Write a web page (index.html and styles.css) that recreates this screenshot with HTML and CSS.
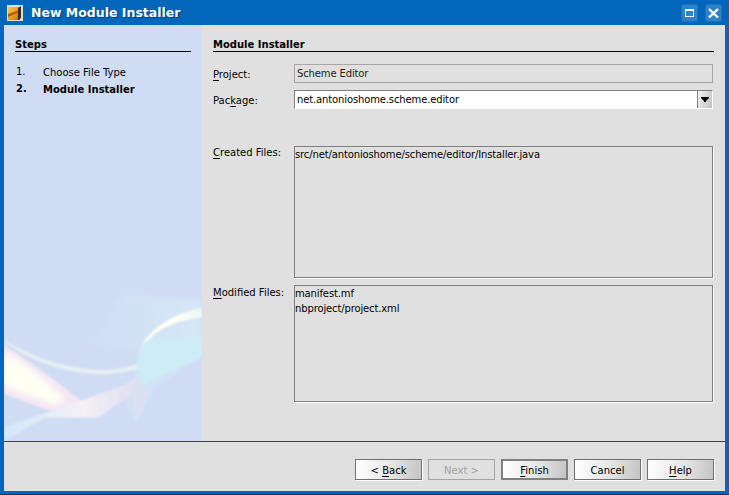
FILE: index.html
```html
<!DOCTYPE html>
<html lang="en">
<head>
<meta charset="utf-8">
<title>New Module Installer</title>
<link rel="stylesheet" href="styles.css">
</head>
<body>
<div class="window">
  <header class="titlebar">
    <svg class="app-icon" width="16" height="16" viewBox="0 0 16 16">
      <defs>
        <linearGradient id="ic" x1="0" y1="0" x2="1" y2="1">
          <stop offset="0" stop-color="#f8c848"/><stop offset="0.55" stop-color="#ec9a20"/><stop offset="1" stop-color="#c8600c"/>
        </linearGradient>
      </defs>
      <rect width="16" height="16" fill="#e4dccc"/>
      <rect x="1" y="2" width="12" height="13" fill="url(#ic)"/>
      <path d="M1 9 L13 5 V7 L1 12Z" fill="#b85810"/>
      <path d="M11 3 L14 1 V13 L11 15Z" fill="#3c2c28"/>
    </svg>
    <h1 class="title">New Module Installer</h1>
    <div class="win-btn">
      <svg width="17" height="18" viewBox="0 0 17 18"><rect x="4.5" y="5.5" width="8" height="7" fill="none" stroke="#fff"/><rect x="4" y="5" width="9" height="2" fill="#fff"/></svg>
    </div>
    <div class="win-btn">
      <svg width="17" height="18" viewBox="0 0 17 18"><path d="M4 5 L13 13.5 M13 5 L4 13.5" stroke="#fff" stroke-width="2.4" fill="none"/></svg>
    </div>
  </header>
  <div class="body">
    <aside class="steps">
      <svg class="swoosh" width="198" height="161" viewBox="0 0 198 161" aria-hidden="true">
        <defs>
          <filter id="b1" x="-20%" y="-20%" width="140%" height="140%"><feGaussianBlur stdDeviation="0.8"/></filter>
          <filter id="b2" x="-20%" y="-20%" width="140%" height="140%"><feGaussianBlur stdDeviation="3"/></filter>
          <linearGradient id="pale" x1="0" y1="0" x2="1" y2="0">
            <stop offset="0" stop-color="#d4e9f6" stop-opacity="0.3"/><stop offset="1" stop-color="#dcf0f8"/>
          </linearGradient>
          <linearGradient id="cres" x1="0" y1="1" x2="1" y2="0">
            <stop offset="0" stop-color="#f8eef0"/><stop offset="0.35" stop-color="#fffff4"/><stop offset="0.7" stop-color="#fffff4"/><stop offset="1" stop-color="#ecf6f4"/>
          </linearGradient>
          <linearGradient id="rib" x1="0" y1="0" x2="1" y2="0">
            <stop offset="0" stop-color="#d4e8f8"/><stop offset="0.6" stop-color="#f4f1f6"/><stop offset="1" stop-color="#eadff0" stop-opacity="0.6"/>
          </linearGradient>
        </defs>
        <path d="M119 13 L92 57 L76 62 L120 70 L198 77 V20 L150 18Z" fill="url(#pale)" opacity="0.6" filter="url(#b2)"/>
        <path d="M133 88 L150 60 L198 80 L198 77 L150 108 L132 145 L120 120Z" fill="#d6ecf6" opacity="0.4" filter="url(#b1)"/>
        <path d="M133 84 C133 70 140 62 149 58 L198 57 V77 C175 87 155 97 140 106 C134 100 133 92 133 84Z" fill="#cdecf6" filter="url(#b1)"/>
        <path d="M133 84 C134 55 165 34 198 28 V37 C175 40 155 48 147 58 C138 63 134 72 133 84Z" fill="url(#cres)" filter="url(#b1)"/>
        <path d="M0 60 C30 78 60 88 96 90 C110 90 122 88 133 84 L134 89 C118 93 105 95 90 94 C60 92 28 82 0 62Z" fill="#e8f0f2" filter="url(#b1)"/>
        <path d="M0 65 C30 85 55 102 76 120 L96 137 L52 133 L0 114Z" fill="#f4e6f4" filter="url(#b1)"/>
        <path d="M0 72 C18 82 40 98 62 120 L50 125 L0 106Z" fill="#fffff2" filter="url(#b2)"/>
        <path d="M133 93 L143 117 L132 140 L128 112Z" fill="#e6e0f0" opacity="0.5" filter="url(#b1)"/>
        <path d="M0 147 C45 132 85 118 112 108 L133 98 L126 116 L95 137 L40 138 L0 161Z" fill="url(#rib)" filter="url(#b1)"/>
      </svg>
      <h2 class="heading">Steps</h2>
      <ol class="step-list">
        <li class="step"><span class="num">1.</span><span>Choose File Type</span></li>
        <li class="step current"><span class="num">2.</span><span>Module Installer</span></li>
      </ol>
    </aside>
    <main class="panel">
      <h2 class="heading">Module Installer</h2>
      <div class="form">
        <div class="row row-project">
          <label class="label"><u>P</u>roject:</label>
          <div class="field">Scheme Editor</div>
        </div>
        <div class="row row-package">
          <label class="label">Pac<u>k</u>age:</label>
          <div class="combo">
            <div class="combo-text">net.antonioshome.scheme.editor</div>
            <div class="combo-btn"><svg width="8" height="5" viewBox="0 0 8 5"><path d="M0 0 H8 V1 L5 4 V5 H3 V4 L0 1Z" fill="#000"/></svg></div>
          </div>
        </div>
        <div class="row row-created">
          <label class="label"><u>C</u>reated Files:</label>
          <div class="area area-created">src/net/antonioshome/scheme/editor/Installer.java</div>
        </div>
        <div class="row row-modified">
          <label class="label"><u>M</u>odified Files:</label>
          <div class="area area-modified">manifest.mf<br>nbproject/project.xml</div>
        </div>
      </div>
    </main>
  </div>
  <footer class="footer">
    <button class="btn">&lt; <u>B</u>ack</button>
    <button class="btn disabled">Next &gt;</button>
    <button class="btn default"><u>F</u>inish</button>
    <button class="btn">Cancel</button>
    <button class="btn"><u>H</u>elp</button>
  </footer>
</div>
</body>
</html>
```
FILE: styles.css
```css
* { box-sizing: border-box; }
html, body { margin: 0; padding: 0; }
body {
  width: 729px; height: 495px; overflow: hidden;
  font-family: "DejaVu Sans", Verdana, sans-serif;
  font-size: 10px; color: #000; background: #0058ae;
}
u { text-underline-offset: 2px; }
.window {
  width: 729px; height: 495px;
  display: flex; flex-direction: column;
  padding: 0 4px 3px;
  background: #0266c0;
  border-bottom: 1px solid #003a7a;
}
.titlebar {
  height: 25px; flex: none;
  display: flex; align-items: center;
  background: #0266bb;
  margin: 0 -4px;
  padding: 0 7px 0 7px;
}
.app-icon { flex: none; margin-right: 8px; }
.title {
  margin: 0; flex: 1;
  font-size: 12.5px; font-weight: bold; color: #fff;
  text-shadow: 1px 1px 1px #003a7a;
}
.win-btn {
  width: 17px; height: 18px; flex: none;
  background: #2f82c8; border-radius: 3px;
  box-shadow: inset 0 0 0 1px #1c70b8;
  margin-left: 7px;
}
.win-btn svg { display: block; }
.body { flex: 1; display: flex; min-height: 0; }
.steps {
  width: 198px; flex: none;
  position: relative;
  background: #cfdcf4;
  padding: 13px 11px 0 11px;
}
.swoosh { position: absolute; left: 0; bottom: 0; }
.heading {
  position: relative;
  margin: 0; font-size: 10px; font-weight: bold; line-height: 13px;
  border-bottom: 1px solid #000;
  height: 14px;
}
.step-list { position: relative; list-style: none; margin: 14px 0 0; padding: 0; }
.step { display: flex; height: 17px; line-height: 14px; }
.num { width: 28px; flex: none; padding-left: 1px; position: relative; top: -1px; }
.current { font-weight: bold; }
.panel {
  flex: 1; background: #e0e0e0;
  padding: 13px 11px 0 11px;
}
.form { display: flex; flex-direction: column; margin-right: 1px; }
.row { display: flex; }
.label { width: 81px; flex: none; line-height: 14px; }
.row-project { margin-top: 12px; height: 26px; }
.row-project .label { padding-top: 4px; }
.row-package .label { padding-top: 4px; }
.row-package { height: 56px; }
.row-created { height: 133px; }
.row-modified { margin-top: 6px; }
.row-modified .label { padding-top: 1px; }
.field, .combo-text, .area { letter-spacing: -0.13px; }
.field {
  flex: 1; height: 19px; line-height: 17px;
  border: 1px solid #a5a5a5; padding-left: 2px;
  color: #222;
}
.combo {
  flex: 1; height: 19px; display: flex;
  border: 1px solid #808080; border-right-color: #fff; border-bottom-color: #fff;
  background: #fff;
}
.combo-text { flex: 1; line-height: 18px; padding-left: 2px; }
.combo-btn {
  width: 15px; flex: none;
  background: linear-gradient(110deg, #f4f4f4, #c0c0c0);
  border-left: 1px solid #808080;
  display: flex; align-items: center; justify-content: center;
}
.combo-btn svg { display: block; }
.area {
  flex: 1; border: 1px solid #808080;
  box-shadow: 1px 1px 0 #fff;
  line-height: 15px;
}
.area-created { height: 132px; }
.area-modified { height: 117px; }
.footer {
  height: 50px; flex: none;
  background: #e0e0e0;
  border-top: 1px solid #404040;
  display: flex; justify-content: flex-end; align-items: flex-start;
  gap: 6px; padding: 17px 11px 0 0;
}
.btn {
  width: 67px; height: 21px; padding: 1px 0 0;
  font: inherit; color: #000;
  background: linear-gradient(100deg, #fff 0, #e8e8e8 50%, #c4c4c4 100%);
  border: 1px solid #707070;
  box-shadow: 1px 1px 0 #fff;
}
.btn.disabled {
  background: #e0e0e0; color: #a0a0a0; border-color: #a5a5a5; box-shadow: none;
}
.btn.default { border: 2px solid #808080; box-shadow: none; }
```
